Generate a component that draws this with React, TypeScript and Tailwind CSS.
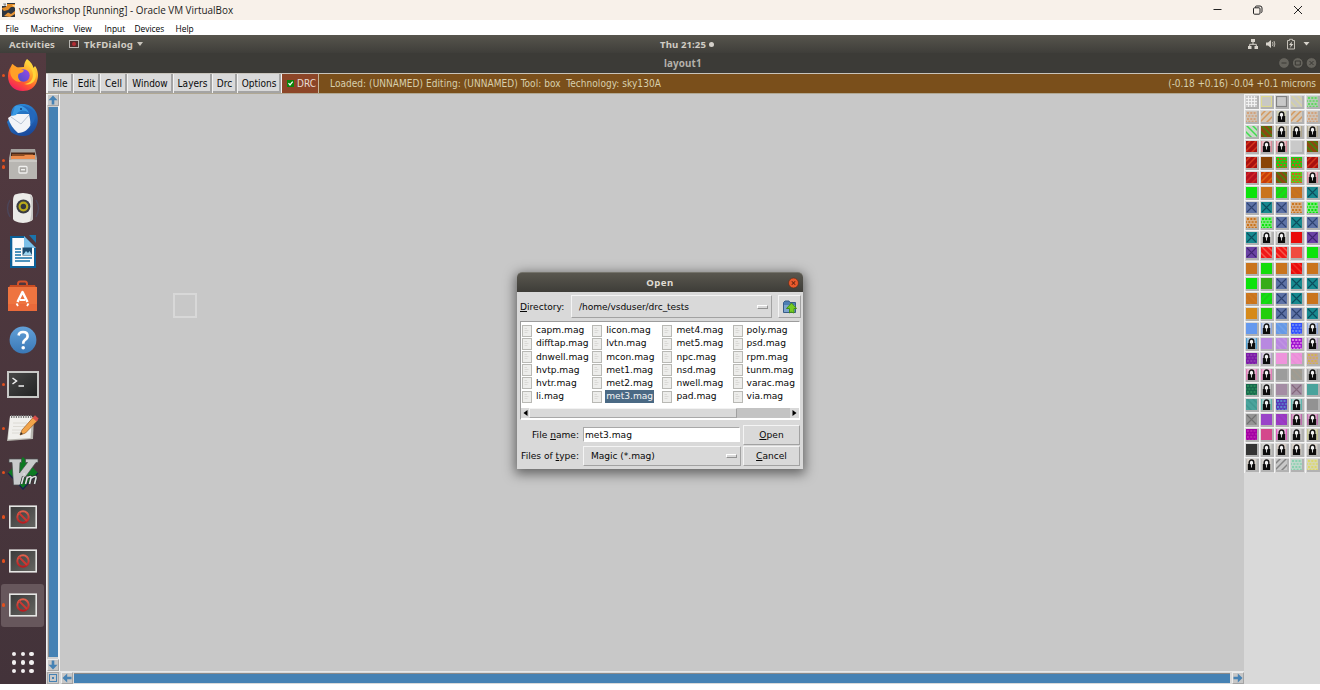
import React from "react";

type Cell = { k: string; a?: string; b?: string };

const s = (a: string): Cell => ({ k: "solid", a });
const up = (a: string, b: string): Cell => ({ k: "up", a, b });
const dn = (a: string, b: string): Cell => ({ k: "down", a, b });
const cr = (a: string, b: string): Cell => ({ k: "cross", a, b });
const dt = (a: string, b: string): Cell => ({ k: "dots", a, b });
const lk = (a = "#dcdcd8", b = "#c0c0bc"): Cell => ({ k: "lock", a, b });

const bx = cr("#5d72a6", "#2f4270");
const tx = cr("#17898f", "#0d4c5c");
const px = cr("#6a42a4", "#3f2470");
const gr = s("#0be30b");
const or = s("#c9741d");
const redUp = up("#a81010", "#d4361c");
const brownGreen = dn("#8a4a10", "#3f860f");
const greenRed = dt("#18d016", "#c8561a");
const lockPink = lk("#ecc0c8", "#d88a98");

const palette: Cell[] = [
  { k: "grid", a: "#c9c9c9", b: "#f4f4f4" }, { k: "frame", a: "#c8c8c4", b: "#dcd890" }, { k: "frame", a: "#c8c8c8", b: "#828282" }, dn("#c8c8c4", "#d6d2a0"), dt("#b4cdb4", "#62d862"),
  dt("#cfc4b8", "#d2a27c"), up("#d4c8b8", "#d49a60"), lk("#d4d4b8"), up("#d4c8b8", "#d49a60"), dt("#cfc4b8", "#d2a27c"),
  dn("#c9d8c6", "#40dc50"), brownGreen, lk("#d8d2c2", "#b0a890"), lk("#d8d2c2", "#b0a890"), lk("#d8d2c2", "#b0a890"),
  redUp, lockPink, lockPink, s("#c9c9c9"), brownGreen,
  redUp, s("#8a4506"), greenRed, greenRed, redUp,
  up("#b5101f", "#cf2626"), up("#c83c0a", "#e06410"), brownGreen, dt("#4ed41a", "#dc5a1e"), lockPink,
  gr, or, up("#12e012", "#30bd20"), dn("#c9741d", "#c07028"), tx,
  bx, tx, bx, dt("#d8b088", "#c9741d"), dt("#80e880", "#0be30b"),
  dt("#d8b088", "#c9741d"), dt("#80e880", "#0be30b"), bx, tx, bx,
  tx, lk("#e4e4e4"), lk("#e4e4e4"), s("#e90c0c"), px,
  px, dn("#f01818", "#f45a4c"), dn("#f01818", "#f45a4c"), s("#f04a40"), gr,
  or, s("#13dc0b"), or, dn("#e90c0c", "#f03024"), or,
  gr, s("#37ac18"), bx, tx, tx,
  dn("#c9741d", "#d07a20"), up("#12e012", "#20c618"), bx, tx, or,
  s("#d68a1a"), s("#22ce0c"), bx, bx, tx,
  s("#6699ee"), lk("#c4d0e8", "#90a8dc"), dn("#6699e6", "#74a2e8"), dt("#3050ff", "#6c88f4"), lk("#c4d0e8", "#90a8dc"),
  lk("#a4c8e4", "#50a0d0"), s("#b888e0"), dn("#b888e0", "#c094e2"), dt("#a014d0", "#dc86e8"), lk("#d4c8dc", "#b49cc4"),
  dt("#7c1aa8", "#8e3cb0"), lk("#d8cee0", "#b8a4cc"), s("#ee94dc"), dn("#ee94dc", "#e890d6"), dt("#c4a4a0", "#d0b450"),
  lk("#ecb4d4", "#e080b8"), lk("#ecb4d4", "#e080b8"), s("#9c9c9c"), dn("#9c9c94", "#a49c90"), lk("#c0c0c0", "#a0a0a0"),
  dt("#17684c", "#2a8858"), lk("#cccccc", "#a0a0a0"), s("#a48ca4"), cr("#a490a4", "#84687c"), s("#4aa39c"),
  dn("#4aa39c", "#409890"), lk("#a8d0cc", "#60b4ac"), dt("#5838b8", "#5c88cc"), lk("#a8d0cc", "#60b4ac"), s("#929292"),
  cr("#949494", "#707070"), s("#9a44c8"), dn("#9a3cc8", "#9c38b8"), lk("#dca8cc", "#bc70ac"), lk("#dca8cc", "#bc70ac"),
  dt("#a400a4", "#b820b0"), s("#d4488c"), lk("#ecb0dc", "#e060c0"), lk("#d4d0d4"), lk("#d8d8b8", "#c4c490"),
  s("#343434"), lk("#d4d4d0"), lk("#dcd0c8"), lk("#dcd4cc"), lk("#dcd4cc"),
  lk("#dcd4cc"), lk("#d8d4d0"), up("#c8c8c8", "#848484"), dt("#c0d8cc", "#88d0b0"), dt("#d8d8b0", "#dcd86c"),
];

function Swatch({ c }: { c: Cell }) {
  return (
    <div className="h-[15.15px] w-[15.17px] border-t border-l border-[#f4f4f4] pt-px pl-px">
      <div className="h-[13px] w-[13px] border-r-2 border-b-2 border-[#b2b2b2]">
        <svg className="block h-[11px] w-[11px]" viewBox="0 0 11 11">
          <rect width="11" height="11" fill={c.a} />
          {c.k === "up" && <path d="M-1 5L5-1M-1 11L11-1M5 12L12 5" stroke={c.b} strokeWidth="1.5" />}
          {c.k === "down" && <path d="M6-1L12 5M0-1L12 11M-1 5L6 12" stroke={c.b} strokeWidth="1.5" />}
          {c.k === "cross" && <path d="M1 1L10 10M10 1L1 10" stroke={c.b} strokeWidth="1.1" />}
          {c.k === "grid" && <path d="M2.5 0V11M5.5 0V11M8.5 0V11M0 2.5H11M0 5.5H11M0 8.5H11" stroke={c.b} strokeWidth=".9" />}
          {c.k === "frame" && <rect x=".5" y=".5" width="10" height="10" fill="none" stroke={c.b} strokeWidth="1.2" />}
          {c.k === "dots" && (
            <>
              <path d="M1 2H11M1 8H11" stroke={c.b} strokeWidth="2" strokeDasharray="2 1.3" />
              <path d="M-1 5H11M-1 10.5H11" stroke={c.b} strokeWidth="1.6" strokeDasharray="2 1.3" />
            </>
          )}
          {c.k === "lock" && (
            <>
              <path d="M.6 0V11M10.4 0V11" stroke={c.b} strokeWidth="1.2" />
              <path d="M3.2 6V3.6C3.2.2 7.8.2 7.8 3.6V6" fill="#f4f4f4" stroke="#141414" strokeWidth="1.4" />
              <rect x="1.8" y="5" width="7.4" height="6" fill="#0c0c0c" />
              <path d="M5.5 4.5V8.5M4.6 5.6H6.4" stroke="#e4e4e4" strokeWidth=".9" />
            </>
          )}
        </svg>
      </div>
    </div>
  );
}

const Blocked = () => (
  <svg width="28" height="24" viewBox="0 0 28 24">
    <defs>
      <linearGradient id="scr" x1="0" y1="0" x2="1" y2="1">
        <stop offset="0" stopColor="#3a3a3a" />
        <stop offset="1" stopColor="#666662" />
      </linearGradient>
      <linearGradient id="ban" x1="0" y1="0" x2="0" y2="1">
        <stop offset="0" stopColor="#e0604c" />
        <stop offset="1" stopColor="#b81c20" />
      </linearGradient>
    </defs>
    <rect x=".8" y="1.2" width="26.4" height="21.6" fill="url(#scr)" stroke="#e6e6e4" strokeWidth="1.6" />
    <circle cx="14" cy="12" r="5.7" fill="none" stroke="url(#ban)" strokeWidth="2" />
    <path d="M10 8L18 16" stroke="#cc3832" strokeWidth="2" />
  </svg>
);

const Firefox = () => (
  <svg width="32" height="34" viewBox="0 0 32 34">
    <defs>
      <linearGradient id="fx" x1=".8" y1="0" x2=".25" y2="1">
        <stop offset="0" stopColor="#fff04a" />
        <stop offset=".4" stopColor="#ffa52a" />
        <stop offset=".7" stopColor="#ff5532" />
        <stop offset="1" stopColor="#ee1a64" />
      </linearGradient>
      <linearGradient id="fxb" x1="1" y1="0" x2="0" y2="1">
        <stop offset="0" stopColor="#9a48ec" />
        <stop offset="1" stopColor="#4a50c4" />
      </linearGradient>
    </defs>
    <path d="M20 1C24 4 26 7 26.4 10L28 8C31 12 32 18 30 23C28 30 22 33 16 33C7 33 1 27 1 18C1 13 3 9 6 6L6.5 9L9 9.4L17 9C17 6 18 3 20 1Z" fill="url(#fx)" />
    <circle cx="16.5" cy="17.5" r="6.2" fill="url(#fxb)" />
    <path d="M5 6C9 8 11 11 17 12.5C16 15 12.5 15 11.5 16C10.5 19 11 21 14 24C7 24 3 19 3.2 13Z" fill="#ffa028" />
    <path d="M20 2C20 8 26 10 26 17C26 22 22 26 17 26C24 28 29 23 29 17C29 11 24 7 20 2Z" fill="#ffd438" />
  </svg>
);

const Thunderbird = () => (
  <svg width="33" height="34" viewBox="0 0 33 34">
    <defs>
      <linearGradient id="tb" x1=".3" y1="0" x2=".7" y2="1">
        <stop offset="0" stopColor="#2c8ad8" />
        <stop offset="1" stopColor="#1a4698" />
      </linearGradient>
    </defs>
    <path d="M9 3C16-1 26 1 30 9C34 17 31 27 23 32C17 34 10 33 5 29C3 25 2 22 1 19L5 13C5 8 6 5 9 3Z" fill="url(#tb)" />
    <path d="M2 15L8 11L23 11L25 21C23 26 18 30 12 30C7 26 4 21 2 15Z" fill="#f2f4f8" />
    <path d="M5 14L15 21L23 12" fill="none" stroke="#b8c4d4" strokeWidth="1" />
    <path d="M8 8C12 2 20 4 21 9C24 10 26 14 24 22C29 20 30 13 28 9C22 2 12 0 8 8Z" fill="#2468bc" />
    <path d="M9 3C15 1 21 5 23 10C18 6 13 7 10 12L6 13Z" fill="#3a9ae4" />
    <circle cx="15" cy="6" r="1" fill="#123c78" />
  </svg>
);

const Files = () => (
  <svg width="30" height="32" viewBox="0 0 30 32">
    <path d="M3 1H27L29 10V31H1V10Z" fill="#a4a29e" />
    <path d="M3 4.5H27V12H3Z" fill="#4a2818" />
    <path d="M4 6H25V8H4Z" fill="#8a4c22" />
    <path d="M3 8H16L17 7H27V12H3Z" fill="#ec8c4c" />
    <path d="M1 12.5L4 11H26L29 12.5V30Q29 31 28 31H2Q1 31 1 30Z" fill="#b8b6b2" />
    <path d="M1 13H29" stroke="#dcdad6" />
    <rect x="11" y="18.5" width="8" height="6.5" rx="1" fill="#a8a6a2" stroke="#f0f0ee" strokeWidth="1.3" />
    <path d="M13 21.7H17" stroke="#f0f0ee" strokeWidth="1.5" />
  </svg>
);

const Music = () => (
  <svg width="34" height="32" viewBox="0 0 34 32">
    <path d="M4 8Q-1 16 4 25M30 8Q35 16 30 25" fill="none" stroke="#4c465a" strokeWidth="1.4" />
    <path d="M9 2.5Q17-.5 25 2.5Q27 4 27 9V27Q26 30 17 31Q8 30 7 27V9Q7 4 9 2.5Z" fill="#ecebe8" />
    <path d="M24 3Q27 16 24 29L27 27V6Z" fill="#c6c6c4" />
    <circle cx="17.4" cy="14.5" r="7" fill="#3a3c42" />
    <circle cx="17.4" cy="14.5" r="4.9" fill="#b8a91c" />
    <circle cx="17.4" cy="14.5" r="2.7" fill="#33363e" />
  </svg>
);

const Writer = () => (
  <svg width="28" height="34" viewBox="0 0 28 34">
    <path d="M1 1H15L27 13V33H1Z" fill="#0b6098" />
    <path d="M3.3 3H15V13H25V31H3.3Z" fill="#fbfbfb" />
    <path d="M15 1L27 13H15Z" fill="#7cc0e8" />
    <path d="M20 0H27V8Z" fill="#1a74ac" />
    <path d="M6 14H12M6 17H12M6 20H12M6 23H23M6 26H21" stroke="#1572a8" strokeWidth="1.4" />
    <rect x="13.5" y="12.5" width="9.5" height="8" fill="#1c4c70" />
    <path d="M14 20L17 16L19 18L20.5 16L23 20Z" fill="#9cd4f0" />
  </svg>
);

const Software = () => (
  <svg width="31" height="32" viewBox="0 0 31 32">
    <path d="M11 7V4Q11 1.5 13 1.5H18Q20 1.5 20 4V7" fill="none" stroke="#d4522c" strokeWidth="2" />
    <path d="M3 5H28L30 10H1Z" fill="#c84c22" />
    <path d="M1 7H30V31H1Z" fill="#ee7440" />
    <path d="M1 24H30V31H1Z" fill="#ea6a3a" />
    <path d="M10.5 22L15.5 12L20.5 22" fill="none" stroke="#fff" strokeWidth="2.5" strokeLinejoin="round" />
    <path d="M9.5 23.5L11 26M21.5 23.5L20 26M13 20H18" stroke="#fff" strokeWidth="1.8" />
  </svg>
);

const Help = () => (
  <svg width="28" height="28" viewBox="0 0 28 28">
    <defs>
      <linearGradient id="hp" x1="0" y1="0" x2="0" y2="1">
        <stop offset="0" stopColor="#62a0d8" />
        <stop offset="1" stopColor="#3a78b6" />
      </linearGradient>
    </defs>
    <circle cx="14" cy="14" r="13.4" fill="url(#hp)" />
    <path d="M9.6 9.5Q10 6 14 6Q18.6 6 18.6 10Q18.6 12.3 16 13.8Q14.2 15 14.2 17.8" fill="none" stroke="#fff" strokeWidth="2.6" />
    <circle cx="14.2" cy="21.8" r="1.8" fill="#fff" />
  </svg>
);

const Terminal = () => (
  <svg width="32" height="27" viewBox="0 0 32 27">
    <defs>
      <linearGradient id="tm" x1="0" y1="0" x2="1" y2="1">
        <stop offset="0" stopColor="#484848" />
        <stop offset="1" stopColor="#222" />
      </linearGradient>
    </defs>
    <rect x="1" y="1" width="30" height="25" fill="url(#tm)" stroke="#c8c8c6" strokeWidth="2" />
    <path d="M5.5 7L9.5 10L5.5 13" fill="none" stroke="#f0f0f0" strokeWidth="1.5" />
    <path d="M11.5 15H17" stroke="#f0f0f0" strokeWidth="1.5" />
  </svg>
);

const Notes = () => (
  <svg className="-translate-y-px" width="33" height="29" viewBox="0 0 33 29">
    <path d="M4 4H28L27 26L1 28Z" fill="#b8b6b0" />
    <path d="M4 3H26L24.5 25L2 26.5Z" fill="#f0efec" />
    <path d="M5 3.5H26" stroke="#777" strokeWidth="3" strokeDasharray="1.2 1.2" />
    <path d="M7 10H21M7 13.5H19M6 17H16M6 20H15" stroke="#dcdad4" />
    <path d="M14 22L16 17L27.5 4L31.5 7.5L19.5 20Z" fill="#f2a44a" stroke="#9c5c20" strokeWidth=".7" />
    <path d="M26.5 5L29 2.2L32.6 5.4L30.5 8.5Z" fill="#d8504c" />
    <path d="M14 22L15 19L16.8 21Z" fill="#333" />
  </svg>
);

const Vim = () => (
  <svg width="32" height="34" viewBox="0 0 32 34">
    <path d="M16 1L31 17L16 33L1 17Z" fill="#0c7a22" />
    <path d="M1 17L16 33L31 17" fill="none" stroke="#16224e" strokeWidth="1.2" />
    <path d="M2 3H14.5V6.5H13L12.5 17L20.5 6.5H18.5V3H31V6.5H29L12.5 29H6.5L5 6.5H2Z" fill="#c8cacb" stroke="#484a4c" strokeWidth=".7" />
    <g stroke="#28332c" strokeWidth="3" fill="none">
      <path d="M16.5 20.5L14.5 28M20.5 20.5L18.5 28M20 22Q24.5 19 24 22L22.5 28M24.5 22Q29.5 19 29 22L27.5 28" />
    </g>
    <g stroke="#e0e2e4" strokeWidth="1.6" fill="none">
      <path d="M16.5 20.5L14.5 28M20.5 20.5L18.5 28M20 22Q24.5 19 24 22L22.5 28M24.5 22Q29.5 19 29 22L27.5 28" />
    </g>
    <path d="M16.4 18L18 18" stroke="#e0e2e4" strokeWidth="1.5" />
  </svg>
);

const dock: { i: React.ReactNode; dots: number; on?: boolean }[] = [
  { i: <Firefox />, dots: 1 },
  { i: <Thunderbird />, dots: 0 },
  { i: <Files />, dots: 2 },
  { i: <Music />, dots: 0 },
  { i: <Writer />, dots: 0 },
  { i: <Software />, dots: 0 },
  { i: <Help />, dots: 0 },
  { i: <Terminal />, dots: 1 },
  { i: <Notes />, dots: 1 },
  { i: <Vim />, dots: 1 },
  { i: <Blocked />, dots: 1 },
  { i: <Blocked />, dots: 1 },
  { i: <Blocked />, dots: 1, on: true },
];

function Dock() {
  return (
    <aside className="flex w-[46px] shrink-0 flex-col bg-linear-to-b from-[#533a40] to-[#43333a] pt-[0.3px]">
      {dock.map((d, n) => (
        <div key={n} className="flex h-[44.15px] shrink-0 items-center">
          <div className="z-10 flex w-[7px] shrink-0 flex-col items-end gap-[3px] pr-[2px]">
            {Array.from({ length: d.dots }, (_, k) => (
              <span key={k} className="h-[3.5px] w-[3.5px] rounded-full bg-[#e2501f]" />
            ))}
          </div>
          <div className={d.on ? "-ml-[6px] flex h-[43px] w-[43px] items-center justify-center rounded-[3px] bg-[#67575c]" : "-ml-[6px] flex h-[43px] w-[43px] items-center justify-center"}>
            {d.i}
          </div>
        </div>
      ))}
      <div className="ml-[12px] mt-[25px] grid w-[22px] grid-cols-3 gap-[4px]">
        {Array.from({ length: 9 }, (_, k) => (
          <span key={k} className="h-[4.3px] w-[4.3px] rounded-full bg-[#f2f0f0]" />
        ))}
      </div>
    </aside>
  );
}

function Arrow({ r }: { r: string }) {
  return (
    <div className="h-[12px] w-[12px] shrink-0 border border-t-[#ececec] border-l-[#ececec] border-r-[#a4a4a4] border-b-[#a4a4a4] bg-[#c6c6c6]">
      <svg className="block h-[10px] w-[10px]" viewBox="0 0 10 10">
        <path d="M5 .5L9.5 5.2H6.3V9.5H3.7V5.2H.5Z" fill="#4682b4" transform={r} />
      </svg>
    </div>
  );
}

const menus: [string, string][] = [
  ["File", "w-[25px]"], ["Machine", "w-[43px]"], ["View", "w-[31px]"], ["Input", "w-[30px]"], ["Devices", "w-[41px]"], ["Help", "w-[30px]"],
];

const tools: [string, string][] = [
  ["File", "w-[25px]"], ["Edit", "w-[26px]"], ["Cell", "w-[26px]"], ["Window", "w-[45px]"], ["Layers", "w-[38px]"], ["Drc", "w-[24px]"], ["Options", "w-[43px]"],
];

const files = [
  ["capm.mag", "difftap.mag", "dnwell.mag", "hvtp.mag", "hvtr.mag", "li.mag"],
  ["licon.mag", "lvtn.mag", "mcon.mag", "met1.mag", "met2.mag", "met3.mag"],
  ["met4.mag", "met5.mag", "npc.mag", "nsd.mag", "nwell.mag", "pad.mag"],
  ["poly.mag", "psd.mag", "rpm.mag", "tunm.mag", "varac.mag", "via.mag"],
];

const raised = "border border-t-[#f4f4f4] border-l-[#f4f4f4] border-r-[#a2a2a2] border-b-[#a2a2a2] bg-[#d9d9d9]";

function Dialog() {
  return (
    <div className="absolute top-[272px] left-[517px] flex h-[197px] w-[286px] flex-col rounded-t-[5px] bg-[#d9d9d9] font-['DejaVu_Sans'] text-[9.1px] leading-[13px] text-[#080808] shadow-[0_3px_12px_2px_rgba(0,0,0,0.5)]">
      <div className="flex h-[20px] shrink-0 items-center rounded-t-[5px] border-t border-[#74736b] bg-linear-to-b from-[#59574f] to-[#3e3d38]">
        <span className="w-[265px] pl-[21px] text-center font-['Noto_Sans'] text-[9.6px] font-bold tracking-[0.5px] text-[#dfdbd2]">Open</span>
        <svg className="ml-[6px]" width="11" height="12" viewBox="0 0 12 12">
          <circle cx="6" cy="6" r="5.4" fill="#e9592c" stroke="#5a2c18" strokeWidth=".7" />
          <path d="M4.1 4.1L7.9 7.9M7.9 4.1L4.1 7.9" stroke="#5e2411" strokeWidth="1.1" />
        </svg>
      </div>
      <div className="flex h-[29px] shrink-0 items-center pl-[3px]">
        <span className="w-[51px] pt-px whitespace-nowrap"><u>D</u>irectory:</span>
        <div className={`${raised} flex h-[23px] w-[201px] items-center justify-between pr-[3px] pl-[7px]`}>
          <span className="pt-px tracking-[-0.08px]">/home/vsduser/drc_tests</span>
          <i className="h-[4px] w-[11px] border border-t-white border-l-white border-r-[#929292] border-b-[#929292]" />
        </div>
        <div className={`${raised} ml-[6px] flex h-[23px] w-[23px] items-center justify-center`}>
          <svg width="14" height="14" viewBox="0 0 14 14">
            <path d="M.5 2.5L2 1H6L7 2.5H12.5V12.5H.5Z" fill="#4e7fb4" stroke="#385c88" />
            <path d="M1 5H12V12H1Z" fill="#7ca4cc" />
            <path d="M8.5 3L13.6 8.5H11V13L8 12L6.5 13V8.5H3.5Z" fill="#76cc22" stroke="#3e8c10" strokeWidth=".9" />
          </svg>
        </div>
      </div>
      <div className="ml-[3px] h-[99px] w-[280px] shrink-0 border border-t-[#9c9c9c] border-l-[#9c9c9c] border-r-white border-b-white bg-white">
        <div className="flex h-[84px] pt-[2px]">
          {files.map((col, i) => (
            <div key={i} className="w-[70.2px] shrink-0 pl-[1px]">
              {col.map((f) => (
                <div key={f} className="flex h-[13.2px] items-center">
                  <svg className="mr-[3px] shrink-0" width="10" height="12" viewBox="0 0 10 12">
                    <rect x=".5" y=".5" width="9" height="11" fill="#ededeb" stroke="#b9b9b5" />
                    <path d="M2.5 3.5H5M2.5 5.5H6.5M2.5 7.5H5.5" stroke="#dad9d6" />
                  </svg>
                  <span className={f === "met3.mag" ? "bg-[#4a6984] px-px leading-[12.6px] text-[#f4f4f4]" : "px-px leading-[12.6px]"}>{f}</span>
                </div>
              ))}
            </div>
          ))}
        </div>
        <div className="mt-[2px] flex h-[10px] items-center bg-[#c3c3c3]">
          <div className="flex h-full w-[8px] items-center justify-center bg-[#d9d9d9]">
            <svg width="5" height="6" viewBox="0 0 5 6"><path d="M4.5 0V6L.5 3Z" fill="#000" /></svg>
          </div>
          <div className="h-[10px] w-[208px] border border-t-[#f2f2f2] border-l-[#f2f2f2] border-r-[#a0a0a0] border-b-[#a8a8a8] bg-[#d9d9d9]" />
          <div className="ml-auto flex h-full w-[9px] items-center justify-center bg-[#d9d9d9]">
            <svg width="5" height="6" viewBox="0 0 5 6"><path d="M.5 0V6L4.5 3Z" fill="#000" /></svg>
          </div>
        </div>
      </div>
      <div className="mt-[3px] flex h-[23px] shrink-0 items-center">
        <span className="w-[66px] pt-px pr-[4px] text-right whitespace-nowrap">File <u>n</u>ame:</span>
        <div className="flex h-[15px] w-[157px] items-center border border-t-[#a8a8a8] border-l-[#a8a8a8] border-r-white border-b-white bg-white pt-px pl-px">met3.mag</div>
        <div className={`${raised} ml-[3px] flex h-[20px] w-[57px] items-center justify-center pt-px`}><span><u>O</u>pen</span></div>
      </div>
      <div className="flex h-[20px] shrink-0 items-center">
        <span className="w-[66px] pr-[4px] text-right whitespace-nowrap">Files of <u>t</u>ype:</span>
        <div className={`${raised} flex h-[20px] w-[158px] items-center justify-between pr-[3px] pl-[7px]`}>
          <span className="tracking-[-0.05px]">Magic (*.mag)</span>
          <i className="h-[4px] w-[11px] border border-t-white border-l-white border-r-[#929292] border-b-[#929292]" />
        </div>
        <div className={`${raised} ml-[2px] flex h-[20px] w-[57px] items-center justify-center`}><span><u>C</u>ancel</span></div>
      </div>
    </div>
  );
}

export default function App() {
  return (
    <div className="relative flex h-[690px] w-[1320px] flex-col overflow-hidden bg-white whitespace-pre">
      <header className="flex h-[20px] shrink-0 items-center bg-[#f8f1ea] font-['Open_Sans'] text-[9.9px] text-[#1c1c1c]">
        <svg className="ml-[2px]" width="13" height="14" viewBox="0 0 13 14">
          <rect width="13" height="14" fill="#2c3440" />
          <path d="M4 1H13V4L9 4L6 7L2 8L0 6V5L4 4Z" fill="#e08a28" />
          <path d="M2 13L6 9.5L9 11L13 8V11L8 14Z" fill="#e8963a" />
          <path d="M0 0H5V3H0Z" fill="#f0f0f0" />
          <path d="M1.2 1H4M2 2H4" stroke="#555" strokeWidth=".7" />
          <path d="M10 2H13V5Z" fill="#ffd28c" />
        </svg>
        <span className="ml-[4px] pt-px">vsdworkshop [Running] - Oracle VM VirtualBox</span>
        <svg className="ml-auto mr-[16px]" width="92" height="14" viewBox="0 0 92 14" fill="none" stroke="#222" strokeWidth="1">
          <path d="M1.5 6.5H9.5" />
          <path d="M43.5 4.5V4Q43.5 3 44.5 3H48Q50 3 50 5V8.5Q50 9.5 49 9.5" />
          <rect x="41.5" y="4.8" width="6.5" height="6.4" rx="1" />
          <path d="M82 3L90 11M90 3L82 11" />
        </svg>
      </header>
      <nav className="flex h-[15px] shrink-0 items-center bg-white pt-px pl-[5.5px] font-['Open_Sans'] text-[8.4px] leading-[13px] text-black">
        {menus.map(([t, w]) => <span key={t} className={w}>{t}</span>)}
      </nav>
      <div className="flex h-[18px] shrink-0 items-center bg-linear-to-b from-[#57554d] to-[#3f3e3a] font-['Noto_Sans'] text-[9.6px] font-bold text-[#d0ccc4]">
        <span className="w-[60px] pt-[2px] pl-[9px] tracking-[0.15px]">Activities</span>
        <svg className="ml-[9px]" width="10" height="8" viewBox="0 0 10 8">
          <rect x=".5" y=".5" width="9" height="7" fill="#4c2c2c" stroke="#b8b6b2" />
          <circle cx="5" cy="4" r="2" fill="#b42c34" />
        </svg>
        <span className="ml-[5px] w-[50px] pt-[2px] tracking-[0.2px]">TkFDialog</span>
        <svg className="ml-[3px]" width="6" height="4" viewBox="0 0 6 4"><path d="M0 0H6L3 4Z" fill="#c8c4bc" /></svg>
        <span className="ml-[517px] w-[48px] pt-[2px] tracking-[0.1px]">Thu 21:25</span>
        <span className="ml-[1px] h-[5px] w-[5px] rounded-full bg-[#d4d0ca]" />
        <svg className="ml-auto mr-[9px]" width="64" height="12" viewBox="0 0 64 12">
          <path d="M4 1H8V4H4ZM1 8H4.5V11H1ZM7.5 8H11V11H7.5Z" fill="#d8d4cc" />
          <path d="M6 4V6.5M2.7 8V6.3H9.3V8" stroke="#d8d4cc" fill="none" />
          <path d="M19 4.5H21L24 2V10L21 7.5H19Z" fill="#d8d4cc" />
          <path d="M25.5 4Q26.6 6 25.5 8M27 3Q28.7 6 27 9" stroke="#bcb8b0" fill="none" />
          <path d="M40.5 2.5H42.5V1.3H45.5V2.5H47.5V11H40.5Z" stroke="#c4c0b8" fill="none" />
          <path d="M45 3.5L42 7H43.8L43 10L46.4 6H44.5Z" fill="#d8d4cc" />
          <path d="M56.5 4H62.5L59.5 7.5Z" fill="#d8d4cc" />
        </svg>
      </div>
      <div className="flex h-[631px] shrink-0">
        <Dock />
        <div className="flex min-w-0 grow flex-col">
          <div className="flex h-[20px] shrink-0 items-center bg-[#3c3b37] font-['Noto_Sans'] text-[9.8px] font-bold text-[#b4b1aa]">
            <span className="ml-[618px] pt-[2px] tracking-[0.15px]">layout1</span>
            <svg className="ml-auto mr-[2px]" width="40" height="12" viewBox="0 0 40 12" fill="none" stroke="#3a3935">
              <circle cx="6" cy="6" r="5.4" fill="#66645d" /><circle cx="19.8" cy="6" r="5.4" fill="#66645d" /><circle cx="33.5" cy="6" r="5.4" fill="#66645d" />
              <path d="M3.5 6H8.5M17.3 4H22.3V8H17.3ZM31.5 4L35.5 8M35.5 4L31.5 8" />
            </svg>
          </div>
          <div className="flex h-[21px] shrink-0 items-center border-t border-b border-t-[#c8c4bc] border-b-[#b0a894] bg-[#7a4f1b] font-['DejaVu_Sans_Condensed','DejaVu_Sans'] text-[10px] text-[#0a0a0a]">
            <div className="flex h-full bg-[#f2f2f2] pl-[2px]">
              {tools.map(([t, w]) => (
                <div key={t} className={`${w} mr-px flex h-[19px] items-center justify-center border-r-2 border-b-2 border-[#a4a4a4] bg-[#d9d9d9] pt-[2px] pl-px`}>{t}</div>
              ))}
            </div>
            <div className="flex h-full w-[37px] items-center border-r border-[#c4b49c] bg-[#8c4527] pl-[5px] text-[#e8dcd4]">
              <svg className="mr-[3px]" width="7" height="7" viewBox="0 0 7 7">
                <rect width="7" height="7" fill="#0b840b" />
                <path d="M1.5 3.2L3 5L5.7 1.7" stroke="#fff" fill="none" strokeWidth="1.2" />
              </svg>
              DRC
            </div>
            <span className="ml-[11px] tracking-[0.05px] text-[#d8cfae]">Loaded: (UNNAMED) Editing: (UNNAMED) Tool: box  Technology: sky130A</span>
            <span className="ml-auto mr-[4px] tracking-[-0.07px] text-[#d8cfae]">(-0.18 +0.16) -0.04 +0.1 microns</span>
          </div>
          <div className="flex min-h-0 grow">
            <div className="flex min-w-0 grow flex-col bg-[#c8c8c8]">
              <div className="flex h-[577px] shrink-0">
                <div className="flex w-[14px] flex-col border-r-2 border-l border-[#f2f2f2] bg-[#d0d0d0]">
                  <Arrow r="" />
                  <div className="mt-[1px] ml-px w-[10px] grow border-l border-[#8a8a8a] bg-[#4682b4]" />
                  <div className="mt-[2px]"><Arrow r="rotate(180 5 5)" /></div>
                </div>
                <div className="ml-[113px] mt-[199px] h-[25px] w-[24px] border-2 border-[#d8d8d8]" />
              </div>
              <div className="flex h-[13px] shrink-0 items-center border-t border-[#e8e8e8] bg-[#d9d9d9] pl-[1px]">
                <div className="flex h-[12px] w-[12px] items-center justify-center border border-[#a8a8a8] bg-[#c8c8c8]">
                  <div className="flex h-[8px] w-[8px] items-center justify-center border-[1.5px] border-[#4682b4]"><i className="h-[2px] w-[2px] bg-[#4682b4]" /></div>
                </div>
                <div className="ml-[2px]"><Arrow r="rotate(-90 5 5)" /></div>
                <div className="ml-[1px] h-[10px] grow border-t border-[#8a8a8a] bg-[#4682b4]" />
                <div className="ml-[2px]"><Arrow r="rotate(90 5 5)" /></div>
              </div>
            </div>
            <div className="w-[76px] shrink-0 bg-[#d9d9d9]">
              <div className="grid w-[76px] grid-cols-[repeat(5,15.17px)] overflow-hidden">
                {palette.map((c, i) => <Swatch key={i} c={c} />)}
              </div>
            </div>
          </div>
        </div>
      </div>
      <Dialog />
    </div>
  );
}
